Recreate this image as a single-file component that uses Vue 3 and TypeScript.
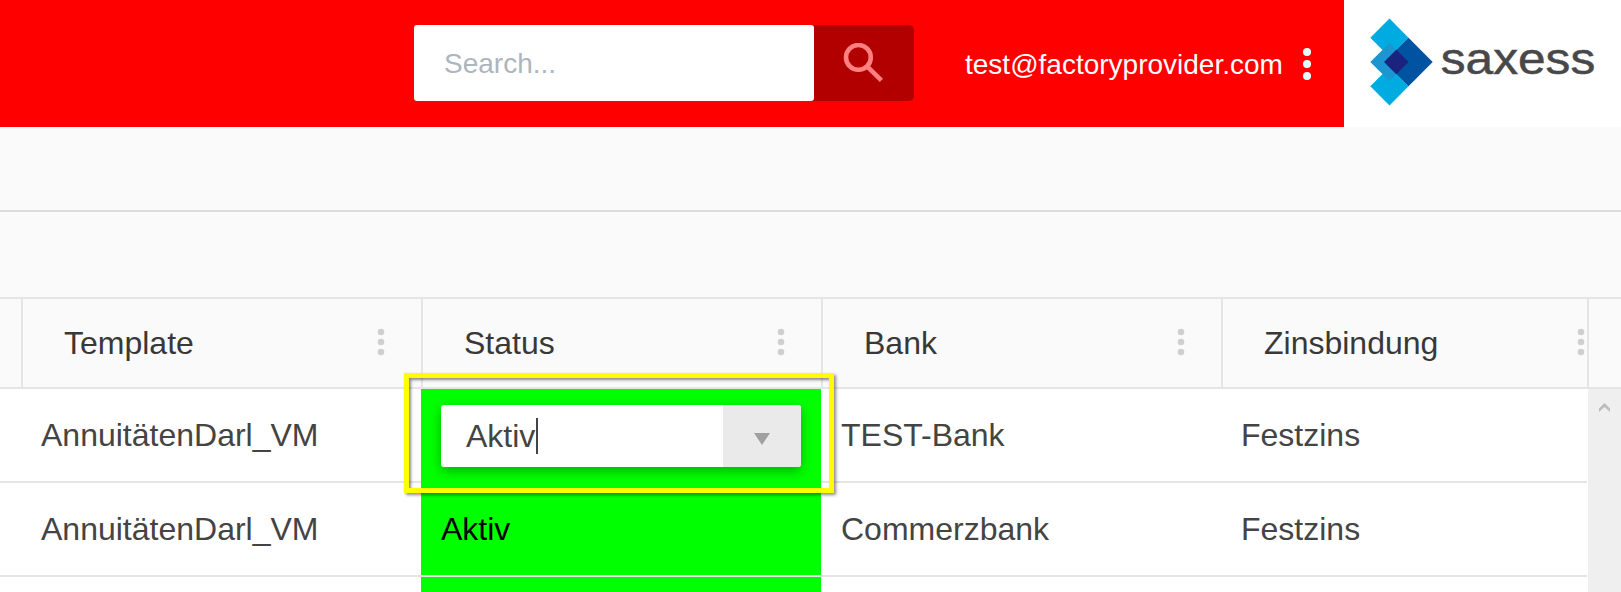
<script setup lang="ts">
import { ref } from 'vue'

interface Column {
  key: 'template' | 'status' | 'bank' | 'zins'
  label: string
}

interface Row {
  template: string
  status: string
  bank: string
  zins: string
  editing?: boolean
}

const columns: Column[] = [
  { key: 'template', label: 'Template' },
  { key: 'status', label: 'Status' },
  { key: 'bank', label: 'Bank' },
  { key: 'zins', label: 'Zinsbindung' },
]

const rows = ref<Row[]>([
  { template: 'AnnuitätenDarl_VM', status: 'Aktiv', bank: 'TEST-Bank', zins: 'Festzins', editing: true },
  { template: 'AnnuitätenDarl_VM', status: 'Aktiv', bank: 'Commerzbank', zins: 'Festzins' },
  { template: '', status: '', bank: '', zins: '' },
])
</script>

<template>
  <div class="page">
    <header class="topbar">
      <div class="search">
        <div class="search-field">Search...</div>
        <button class="search-button" aria-label="Search">
          <svg width="42" height="40" viewBox="0 0 42 40">
            <circle cx="15.4" cy="14.4" r="12.4" />
            <path d="M24.6 23.8L38.4 37.4" />
          </svg>
        </button>
      </div>
      <div class="user">test@factoryprovider.com</div>
      <svg class="user-menu" width="8" height="32" viewBox="0 0 8 32">
        <circle cx="4" cy="4" r="4" />
        <circle cx="4" cy="16" r="4" />
        <circle cx="4" cy="28" r="4" />
      </svg>
      <div class="brand">
        <svg width="277" height="127" viewBox="0 0 277 127">
          <path fill="#00abe2" d="M45.5 18.5L64.5 37.7L45.5 57L26.3 37.7z" />
          <path fill="#00abe2" d="M45.5 67L64.5 86.3L45.5 105.5L26.3 86.3z" />
          <path fill="#1c96d0" d="M45.5 43L64.5 62L45.5 81L26.3 62z" />
          <path fill="#0053a0" d="M64.5 37.7L88.7 62L64.5 86.3L40.2 62z" />
          <path fill="#1a237e" d="M52.4 49.8L64.5 62L52.4 74.2L40.2 62z" />
          <text x="96.7" y="73.6" textLength="154.6" lengthAdjust="spacingAndGlyphs">saxess</text>
        </svg>
      </div>
    </header>

    <div class="toolbar"></div>
    <div class="subbar"></div>

    <section class="grid">
      <div class="grid-head">
        <div class="lead"></div>
        <div v-for="col in columns" :key="col.key" class="head-cell" :class="col.key">
          <span>{{ col.label }}</span>
          <svg width="8" height="28" viewBox="0 0 8 28">
            <circle cx="4" cy="4" r="3.3" />
            <circle cx="4" cy="14" r="3.3" />
            <circle cx="4" cy="24" r="3.3" />
          </svg>
        </div>
        <div class="head-end"></div>
      </div>
      <div class="grid-body">
        <div class="rows">
          <div v-for="(row, i) in rows" :key="i" class="row" :class="{ editing: row.editing }">
            <div class="lead"></div>
            <div v-for="col in columns" :key="col.key" class="cell" :class="col.key">
              <div v-if="row.editing && col.key === 'status'" class="combo">
                <div class="combo-value">{{ row.status }}<i class="caret"></i></div>
                <div class="combo-button">
                  <svg width="16" height="12" viewBox="0 0 16 12"><path d="M0 0H16L8 12z" /></svg>
                </div>
              </div>
              <template v-else>{{ row[col.key] }}</template>
            </div>
          </div>
        </div>
        <div class="scrollbar">
          <svg width="11" height="9" viewBox="0 0 11 9"><path d="M0 5.5L5.5 0L11 5.5V9L5.5 4L0 9z" /></svg>
        </div>
      </div>
      <div class="highlight"></div>
    </section>
  </div>
</template>

<style>
body {
  margin: 0;
  overflow: hidden;
}
</style>

<style scoped>
.page {
  width: 1621px;
  height: 592px;
  overflow: hidden;
  display: flex;
  flex-direction: column;
  background: #fafafa;
  color: #444;
  font: 32px/36px 'Liberation Sans', Arial, sans-serif;
}
.page * {
  box-sizing: border-box;
}
.topbar {
  flex: none;
  display: flex;
  height: 127px;
  background: #f00;
}
.search {
  flex: none;
  display: flex;
  width: 500px;
  height: 76px;
  margin: 25px 0 0 414px;
  border-radius: 5px;
  background: #b20000;
}
.search-field {
  width: 400px;
  padding: 21px 0 0 30px;
  border-radius: 3px;
  background: #fff;
  color: #adb5bd;
  font-size: 28px;
}
.search-button {
  display: flex;
  width: 100px;
  padding: 18px 0 0 29px;
  border: 0;
  background: none;
}
.search-button svg {
  flex: none;
  fill: none;
  stroke: #ff8080;
  stroke-width: 4.6;
}
.user {
  flex: none;
  padding: 47px 0 0 51px;
  color: #fff;
  font-size: 28px;
}
.user-menu {
  flex: none;
  margin: 48px 33px 0 auto;
  fill: #e0ffff;
}
.brand {
  flex: none;
  width: 277px;
  background: #fff;
}
.brand svg {
  display: block;
}
.brand text {
  fill: #48484a;
  stroke: #48484a;
  stroke-width: 0.5;
  font-size: 44px;
}
.toolbar {
  flex: none;
  height: 85px;
  border-bottom: 2px solid #dcdcdc;
}
.subbar {
  flex: none;
  height: 85px;
}
.grid {
  position: relative;
  flex: none;
  height: 295px;
}
.grid-head {
  display: flex;
  height: 92px;
  border-top: 2px solid #e5e5e5;
  border-bottom: 2px solid #e5e5e5;
}
.lead {
  flex: none;
  width: 21px;
}
.head-cell {
  flex: none;
  display: flex;
  justify-content: space-between;
  width: 400px;
  padding: 26px 36px 0 41px;
  border-left: 2px solid #e5e5e5;
  color: #383838;
}
.head-cell svg {
  margin-top: 3px;
  fill: #cfcfcf;
}
.head-cell.zins {
  width: 366px;
  padding-right: 2px;
}
.head-end {
  flex: 1;
  border-left: 2px solid #e5e5e5;
}
.grid-body {
  display: flex;
  height: 203px;
  background: #fff;
}
.rows {
  width: 1587px;
  margin-right: 1px;
}
.row {
  display: flex;
  height: 94px;
  border-bottom: 2px solid #e5e5e5;
}
.cell {
  flex: none;
  width: 400px;
  padding: 28px 0 0 20px;
}
.cell.zins {
  width: 366px;
}
.cell.status {
  background: #0f0;
  color: #000;
}
.row.editing .status {
  height: 94px;
  padding-top: 16px;
}
.combo {
  display: flex;
  width: 360px;
  height: 62px;
  overflow: hidden;
  border-radius: 3px;
  background: #fff;
  box-shadow: 0 4px 12px rgba(0, 0, 0, 0.3);
  color: #444;
}
.combo-value {
  display: flex;
  width: 282px;
  padding: 13px 0 0 25px;
}
.caret {
  width: 2px;
  height: 36px;
  margin-left: 1px;
  background: #444;
}
.combo-button {
  width: 78px;
  padding: 28px 0 0 31px;
  background: #eaeaea;
}
.combo-button svg,
.scrollbar svg {
  display: block;
  fill: #a0a0a0;
}
.scrollbar {
  flex: 1;
  padding: 14px 0 0 11px;
  background: #efefef;
}
.scrollbar svg {
  fill: #bcbcbc;
}
/* Annotation frame over the cell being edited */
.highlight {
  position: absolute;
  left: 404px;
  top: 76px;
  width: 430px;
  height: 120px;
  border: 5px solid #ff0;
  box-shadow: 2px 2px 3px rgba(0, 0, 0, 0.45), inset 2px 2px 3px rgba(0, 0, 0, 0.45);
}
</style>
